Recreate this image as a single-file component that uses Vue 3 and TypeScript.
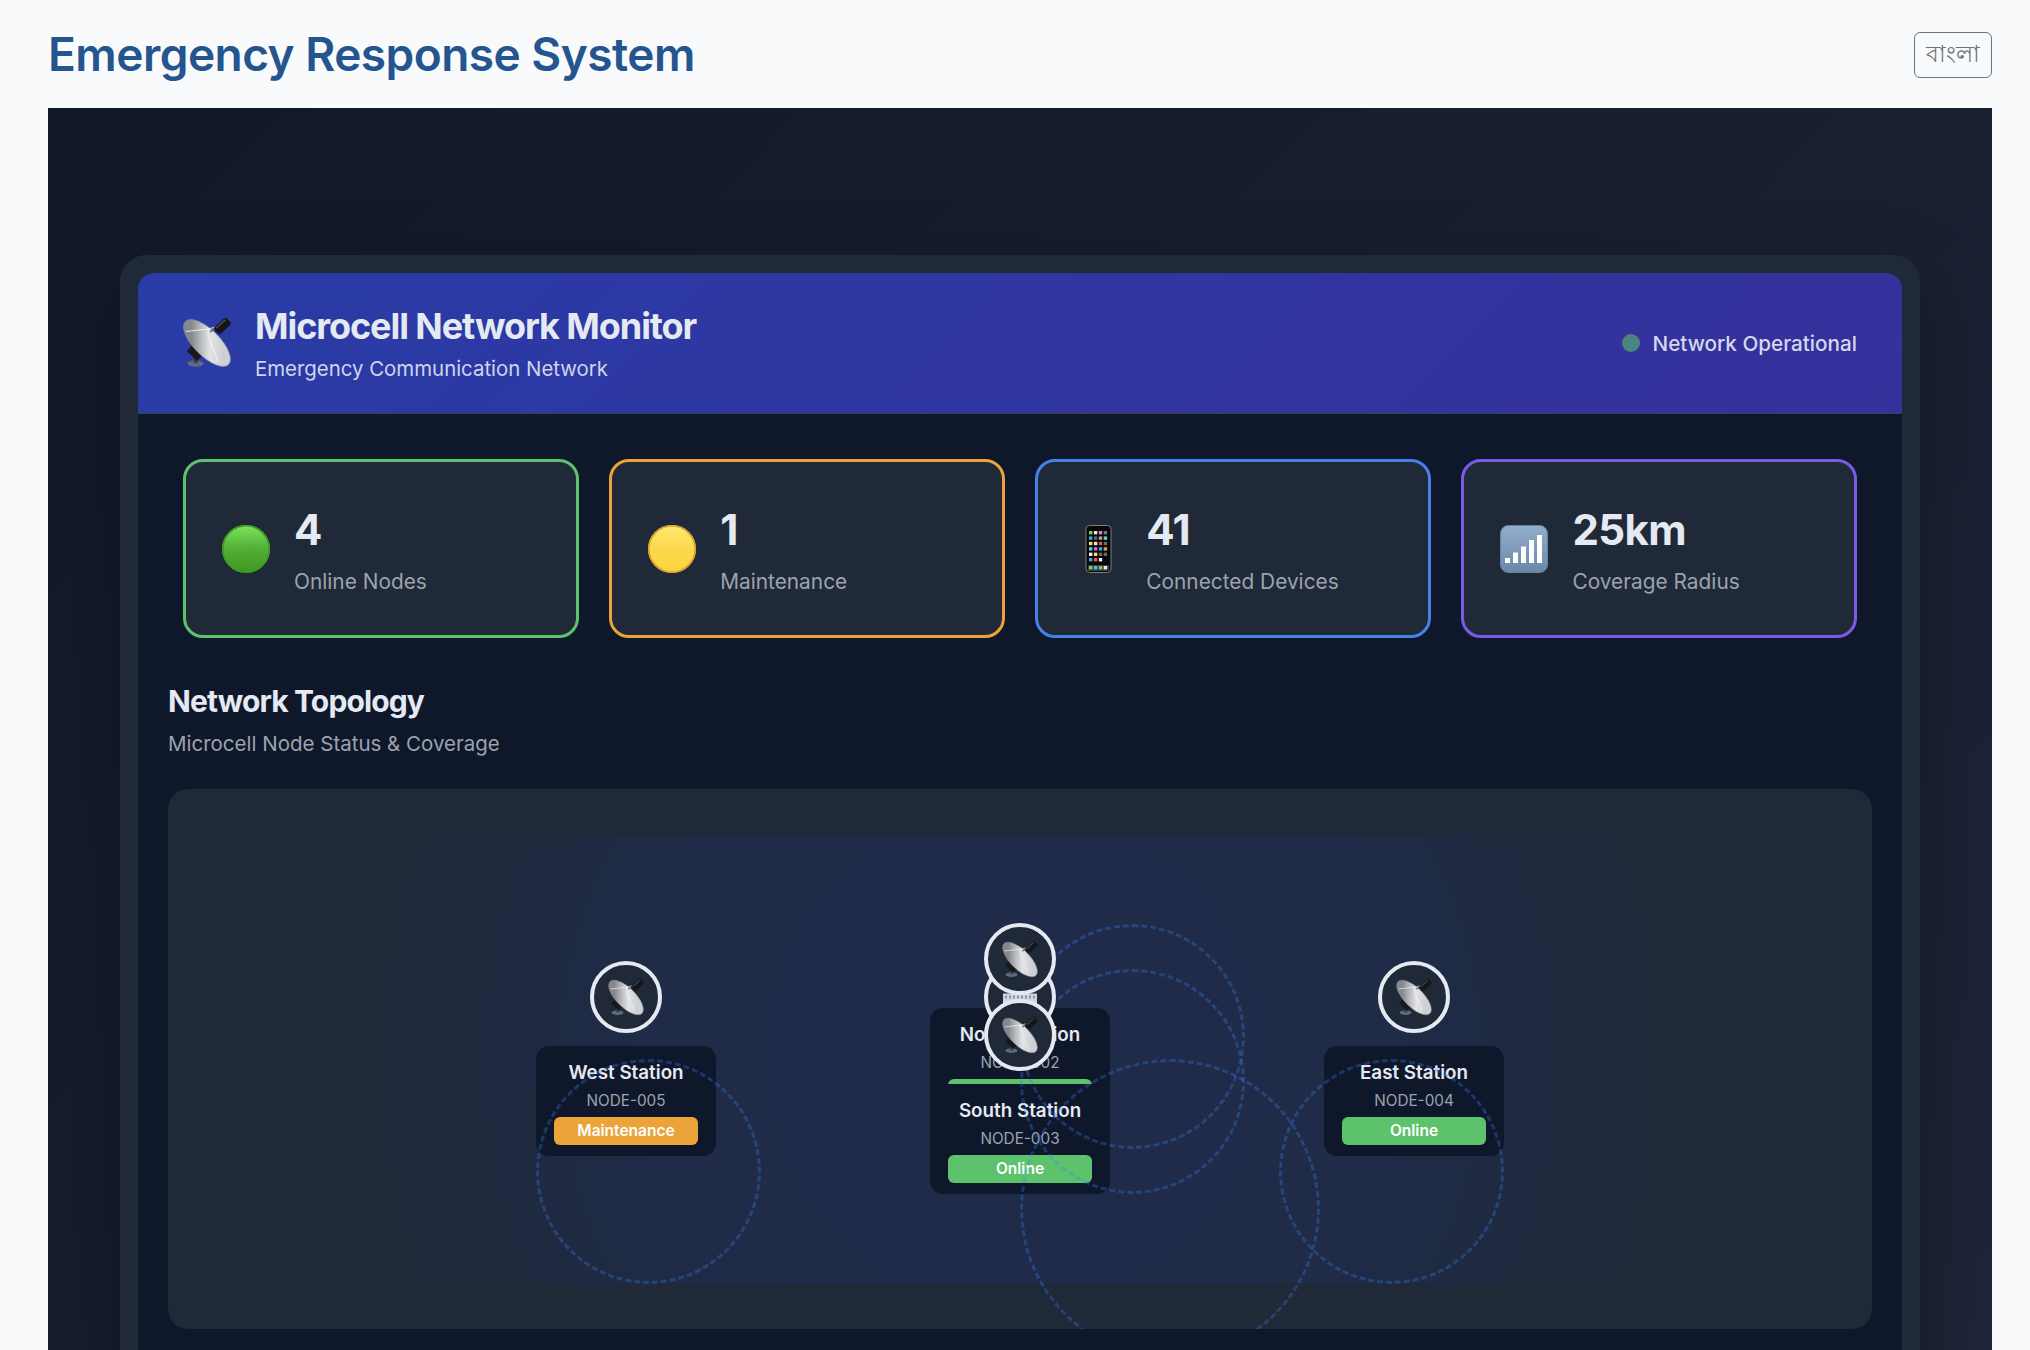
<script setup lang="ts">
interface Stat { value: string; label: string; tone: string; icon: string }
interface NodeItem { name: string; id: string; x: number; y: number; status: string; icon: string }
interface Ring { x: number; y: number; d: number }

const stats: Stat[] = [
  { value: '4', label: 'Online Nodes', tone: 'green', icon: 'green' },
  { value: '1', label: 'Maintenance', tone: 'orange', icon: 'yellow' },
  { value: '41', label: 'Connected Devices', tone: 'blue', icon: 'phone' },
  { value: '25km', label: 'Coverage Radius', tone: 'purple', icon: 'signal' },
]

// Centres of the node icons, relative to the map canvas.
const nodes: NodeItem[] = [
  { name: 'Central Hub', id: 'NODE-001', x: 807, y: 162, status: 'Online', icon: 'hub' },
  { name: 'North Station', id: 'NODE-002', x: 807, y: 124, status: 'Online', icon: 'dish' },
  { name: 'South Station', id: 'NODE-003', x: 807, y: 200, status: 'Online', icon: 'dish' },
  { name: 'East Station', id: 'NODE-004', x: 1201, y: 162, status: 'Online', icon: 'dish' },
  { name: 'West Station', id: 'NODE-005', x: 413, y: 162, status: 'Maintenance', icon: 'dish' },
]

// Coverage rings: top-left and diameter, relative to the map canvas.
const rings: Ring[] = [
  { x: 807, y: 224, d: 300 },
  { x: 807, y: 89, d: 225 },
  { x: 807, y: 134, d: 225 },
  { x: 1066, y: 224, d: 225 },
  { x: 323, y: 224, d: 225 },
]
</script>

<template>
  <div class="page">
    <header class="topbar">
      <h1 class="brand">Emergency Response System</h1>
      <button class="lang" type="button">বাংলা</button>
    </header>

    <main class="stage">
      <section class="monitor">
        <div class="monitor-head">
          <div class="head-left">
            <svg class="head-icon" viewBox="0 0 48 50"><use href="#dish-art" /></svg>
            <div>
              <h2 class="head-title">Microcell Network Monitor</h2>
              <p class="head-sub">Emergency Communication Network</p>
            </div>
          </div>
          <div class="head-status"><span class="dot"></span>Network Operational</div>
        </div>

        <div class="monitor-body">
          <div class="stats">
            <div v-for="s in stats" :key="s.label" class="stat" :class="s.tone">
              <svg v-if="s.icon === 'green'" class="stat-icon" viewBox="0 0 48 48">
                <defs>
                  <linearGradient id="gball" x1="0" y1="0" x2="0" y2="1">
                    <stop offset="0" stop-color="#7fe65a" />
                    <stop offset=".45" stop-color="#54b23a" />
                    <stop offset="1" stop-color="#3f9420" />
                  </linearGradient>
                </defs>
                <circle cx="24" cy="24" r="24" fill="url(#gball)" />
                <circle cx="24" cy="24" r="23.2" fill="none" stroke="#3f9a22" stroke-width="1.6" />
              </svg>
              <svg v-else-if="s.icon === 'yellow'" class="stat-icon" viewBox="0 0 48 48">
                <defs>
                  <linearGradient id="yball" x1="0" y1="0" x2="0" y2="1">
                    <stop offset="0" stop-color="#ffe873" />
                    <stop offset=".5" stop-color="#fcd84e" />
                    <stop offset="1" stop-color="#f9d340" />
                  </linearGradient>
                </defs>
                <circle cx="24" cy="24" r="24" fill="url(#yball)" />
                <circle cx="24" cy="24" r="23.2" fill="none" stroke="#d99f2b" stroke-width="1.6" />
              </svg>
              <svg v-else-if="s.icon === 'phone'" class="stat-icon" viewBox="0 0 48 48">
                <g transform="translate(4.5 0)">
                  <rect x="7.5" y=".5" width="25" height="47" rx="3.6" fill="#060606" stroke="#7c7f85" stroke-width="1" />
                  <rect x="10.5" y="6" width="3.4" height="3.4" fill="#63d85d" /><rect x="15.4" y="6" width="3.4" height="3.4" fill="#e8e8e8" /><rect x="20.3" y="6" width="3.4" height="3.4" fill="#c98be0" /><rect x="25.2" y="6" width="3.4" height="3.4" fill="#77797d" />
                  <rect x="10.5" y="11.4" width="3.4" height="3.4" fill="#39a7ea" /><rect x="15.4" y="11.4" width="3.4" height="3.4" fill="#66686c" /><rect x="20.3" y="11.4" width="3.4" height="3.4" fill="#b9a580" /><rect x="25.2" y="11.4" width="3.4" height="3.4" fill="#5cd2ee" />
                  <rect x="10.5" y="16.8" width="3.4" height="3.4" fill="#f4e25a" /><rect x="15.4" y="16.8" width="3.4" height="3.4" fill="#e8e8e8" /><rect x="20.3" y="16.8" width="3.4" height="3.4" fill="#e4574b" /><rect x="25.2" y="16.8" width="3.4" height="3.4" fill="#67696d" />
                  <rect x="10.5" y="22.2" width="3.4" height="3.4" fill="#57cfe0" /><rect x="15.4" y="22.2" width="3.4" height="3.4" fill="#d36bd4" /><rect x="20.3" y="22.2" width="3.4" height="3.4" fill="#3f9ff0" /><rect x="25.2" y="22.2" width="3.4" height="3.4" fill="#f09a2b" />
                  <rect x="10.5" y="27.6" width="3.4" height="3.4" fill="#eeeeee" /><rect x="15.4" y="27.6" width="3.4" height="3.4" fill="#f4e25a" /><rect x="20.3" y="27.6" width="3.4" height="3.4" fill="#66686c" /><rect x="25.2" y="27.6" width="3.4" height="3.4" fill="#66686c" />
                  <rect x="10.5" y="33" width="3.4" height="3.4" fill="#3f9ff0" /><rect x="15.4" y="33" width="3.4" height="3.4" fill="#e4574b" /><rect x="20.3" y="33" width="3.4" height="3.4" fill="#eeeeee" />
                  <rect x="9.3" y="40" width="21.4" height="6" rx="1" fill="#3a3b3e" />
                  <rect x="10.5" y="41" width="3.4" height="3.4" fill="#63d85d" /><rect x="15.4" y="41" width="3.4" height="3.4" fill="#5cb8ea" /><rect x="20.3" y="41" width="3.4" height="3.4" fill="#63d85d" /><rect x="25.2" y="41" width="3.4" height="3.4" fill="#eeeeee" />
                </g>
              </svg>
              <svg v-else class="stat-icon" viewBox="0 0 48 48">
                <defs>
                  <linearGradient id="sbox" x1="0" y1="0" x2="0" y2="1">
                    <stop offset="0" stop-color="#93aecb" />
                    <stop offset="1" stop-color="#6a87a8" />
                  </linearGradient>
                </defs>
                <rect x=".5" y=".5" width="47" height="47" rx="8" fill="url(#sbox)" stroke="#64819f" />
                <g fill="#fff">
                  <rect x="5" y="33" width="5" height="5" /><rect x="13" y="27.5" width="5" height="10.5" /><rect x="21" y="21.5" width="5" height="16.5" /><rect x="29" y="15" width="5" height="23" /><rect x="37" y="10" width="5" height="28" />
                </g>
              </svg>
              <div class="stat-text">
                <div class="stat-value">{{ s.value }}</div>
                <div class="stat-label">{{ s.label }}</div>
              </div>
            </div>
          </div>

          <div class="topology">
            <h3 class="topo-title">Network Topology</h3>
            <p class="topo-sub">Microcell Node Status &amp; Coverage</p>
            <div class="map-card">
              <div class="map">
                <div
                  v-for="n in nodes"
                  :key="n.id"
                  class="node"
                  :style="{ left: n.x + 'px', top: n.y + 'px' }"
                >
                  <div class="node-circle">
                    <svg v-if="n.icon === 'dish'" class="node-icon" viewBox="0 0 48 50"><use href="#dish-art" /></svg>
                    <svg v-else class="node-icon" viewBox="0 0 36 36">
                      <rect x="1" y="14" width="34" height="22" fill="#cfd6de" />
                      <g fill="#7f9cc0">
                        <rect x="3" y="16" width="2" height="3" /><rect x="7" y="16" width="2" height="3" /><rect x="11" y="16" width="2" height="3" /><rect x="15" y="16" width="2" height="3" /><rect x="19" y="16" width="2" height="3" /><rect x="23" y="16" width="2" height="3" /><rect x="27" y="16" width="2" height="3" /><rect x="31" y="16" width="2" height="3" />
                      </g>
                    </svg>
                  </div>
                  <div class="node-card">
                    <div class="node-name">{{ n.name }}</div>
                    <div class="node-id">{{ n.id }}</div>
                    <div class="node-pill" :class="n.status === 'Online' ? 'ok' : 'warn'">{{ n.status }}</div>
                  </div>
                </div>
                <div
                  v-for="(r, i) in rings"
                  :key="i"
                  class="ring"
                  :style="{ left: r.x + 'px', top: r.y + 'px', width: r.d + 'px', height: r.d + 'px' }"
                ></div>
              </div>
            </div>
          </div>
        </div>
      </section>
    </main>

    <svg class="defs" width="0" height="0" aria-hidden="true">
      <defs>
        <linearGradient id="dishface" gradientUnits="userSpaceOnUse" x1="13" y1="36" x2="35" y2="14">
          <stop offset="0" stop-color="#85888e" />
          <stop offset=".25" stop-color="#b0b2b7" />
          <stop offset=".6" stop-color="#e3e4e7" />
          <stop offset="1" stop-color="#cfd0d4" />
        </linearGradient>
        <g id="dish-art">
          <ellipse cx="12.5" cy="45.5" rx="8" ry="3.2" fill="#5d6a80" />
          <rect x="10.5" y="38" width="4.5" height="7" fill="#3c3f46" />
          <path d="M4 33 L10 26 L21 36 L14 43 Z" fill="#17181c" />
          <ellipse cx="24" cy="25" rx="30.5" ry="13" transform="rotate(45 24 25)" fill="url(#dishface)" stroke="#8a8d93" stroke-width=".7" />
          <path d="M3 13.5 L25 11 L33 9 M25 11 L25 18 L35 43" fill="none" stroke="#f5f5f6" stroke-width=".9" />
          <path d="M33 9 L27 14" stroke="#6f7278" stroke-width="1.8" />
          <g transform="rotate(-42 39.5 8)">
            <rect x="31" y="3.5" width="17" height="9" rx="2.8" fill="#15161a" />
            <rect x="33" y="4.6" width="13" height="1.4" rx=".7" fill="#4a4d54" />
          </g>
        </g>
      </defs>
    </svg>
  </div>
</template>

<style>
html, body { margin: 0; background: #f8fafc; }
</style>

<style scoped>
.page {
  width: 2030px;
  height: 1350px;
  overflow: hidden;
  background: #f8fafc;
  font-family: Inter, "Noto Sans", "Liberation Sans", sans-serif;
  color: #e5e7eb;
  box-sizing: border-box;
  padding: 0 38px 0 48px;
  position: relative;
}
.defs { position: absolute; }
.topbar {
  height: 108px;
  display: flex;
  align-items: center;
  justify-content: space-between;
  box-sizing: border-box;
}
.brand {
  margin: 0;
  font-size: 46px;
  font-weight: 600;
  letter-spacing: -0.52px;
  color: #24558f;
}
.lang {
  width: 78px;
  height: 46px;
  margin-top: 2px;
  box-sizing: border-box;
  border: 1px solid #6c757d;
  border-radius: 6px;
  background: transparent;
  color: #6c757d;
  font-family: "Noto Sans", Inter, sans-serif;
  font-size: 23px;
  padding: 0;
}
.stage {
  height: 1242px;
  padding: 147px 72px 0;
  box-sizing: border-box;
  background: linear-gradient(135deg, #111829 0%, #1e2538 100%);
}
.monitor {
  padding: 18px;
  border-radius: 26px;
  background: #1f2937;
  box-shadow: 0 26px 78px rgba(0, 0, 0, 0.3);
}
.monitor-head {
  height: 141px;
  box-sizing: border-box;
  padding: 0 45px;
  display: flex;
  align-items: center;
  justify-content: space-between;
  border-radius: 16px 16px 0 0;
  background: linear-gradient(135deg, #293ca7 0%, #36309b 100%);
  border-bottom: 1px solid #374151;
}
.head-left { display: flex; align-items: center; gap: 24px; }
.head-icon { width: 48px; height: 50px; flex: none; }
.head-title {
  margin: 0;
  font-size: 36px;
  line-height: 44px;
  font-weight: 700;
  letter-spacing: -1.07px;
  color: #e5e9f2;
}
.head-sub {
  margin: 8px 0 0;
  font-size: 20.4px;
  line-height: 26px;
  color: #cfd5ec;
}
.head-status {
  display: flex;
  align-items: center;
  gap: 12px;
  font-size: 20.7px;
  font-weight: 500;
  color: #d4d8ec;
}
.dot { width: 18px; height: 18px; border-radius: 50%; background: #4b8580; }
.monitor-body {
  background: #0f172a;
  padding: 45px 30px 60px;
}
.stats {
  display: grid;
  grid-template-columns: repeat(4, 1fr);
  gap: 30.6px;
  padding: 0 15px;
}
.stat {
  height: 179px;
  box-sizing: border-box;
  border: 3px solid;
  border-radius: 20px;
  background: #1f2937;
  display: flex;
  align-items: center;
  gap: 24px;
  padding: 0 36px;
}
.stat.green { border-color: #5cc26c; }
.stat.orange { border-color: #eba33a; }
.stat.blue { border-color: #4482e8; }
.stat.purple { border-color: #7c5ae6; }
.stat-icon { width: 48px; height: 48px; flex: none; }
.stat-value {
  margin-top: 1.5px;
  font-size: 42px;
  line-height: 52px;
  font-weight: 700;
  letter-spacing: -0.6px;
  color: #e5e9f2;
}
.stat-label { margin-top: 12.5px; font-size: 20.85px; line-height: 26px; color: #9ca3af; }
.topology { margin-top: 43px; }
.topo-title {
  margin: 0;
  font-size: 30px;
  line-height: 40px;
  font-weight: 700;
  letter-spacing: -0.87px;
  color: #e5e9f2;
}
.topo-sub { margin: 10px 0 0; font-size: 20.5px; line-height: 26px; color: #9ca3af; }
.map-card {
  margin-top: 32px;
  height: 540px;
  box-sizing: border-box;
  padding: 46px 45px 45px;
  border-radius: 20px;
  background: #1f2937;
  overflow: hidden;
}
.map {
  position: relative;
  height: 449px;
  background: radial-gradient(circle at center, #1f2b49 0%, #1f2b47 45%, #1f2937 85%);
}
.node {
  position: absolute;
  width: 180px;
  margin-left: -90px;
  margin-top: -36px;
  display: flex;
  flex-direction: column;
  align-items: center;
}
.node-circle {
  width: 72px;
  height: 72px;
  box-sizing: border-box;
  border: 4px solid #e5e9f2;
  border-radius: 50%;
  background: #1f2937;
  display: flex;
  align-items: center;
  justify-content: center;
  position: relative;
  z-index: 1;
}
.node-icon { width: 36px; height: 37px; }
.node-card {
  margin-top: 13px;
  width: 180px;
  height: 110px;
  box-sizing: border-box;
  padding: 15.5px 18px 0;
  border-radius: 13px;
  background: #0f172a;
  text-align: center;
}
.node-name { font-size: 18.8px; line-height: 22px; font-weight: 600; color: #e5e9f2; }
.node-id { margin-top: 7px; font-size: 15.3px; line-height: 20px; color: #9ca3af; }
.node-pill {
  margin-top: 6px;
  height: 28px;
  border-radius: 6px;
  font-size: 15.5px;
  line-height: 28px;
  font-weight: 600;
  color: #fff;
}
.node-pill.ok { background: #5cc26c; }
.node-pill.warn { background: #eba33a; }
.ring {
  position: absolute;
  box-sizing: border-box;
  border: 3px dashed rgba(59, 130, 246, 0.3);
  border-radius: 50%;
  pointer-events: none;
}
</style>
